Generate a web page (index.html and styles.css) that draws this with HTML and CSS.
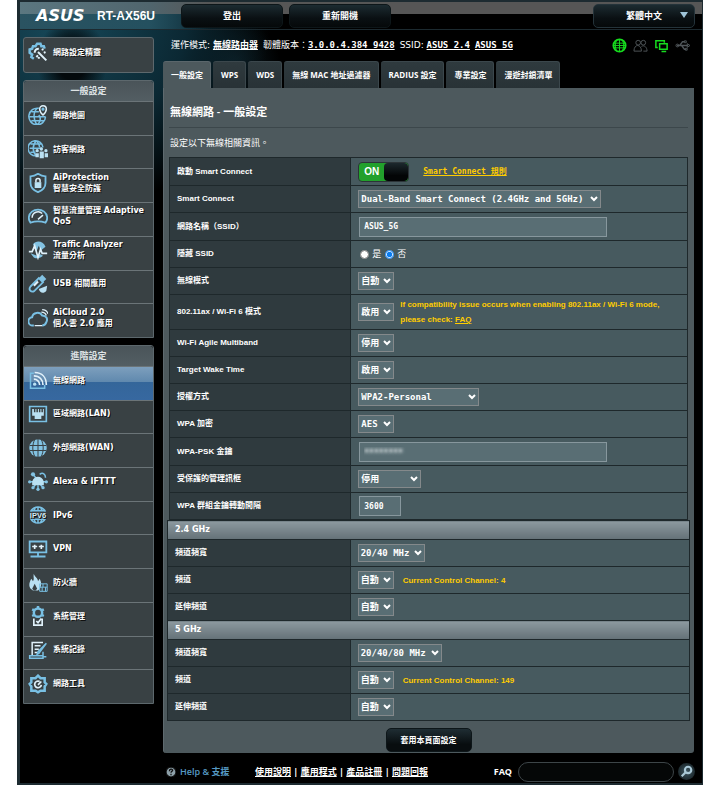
FILE: index.html
```html
<!DOCTYPE html>
<html lang="zh-TW">
<head>
<meta charset="utf-8">
<title>RT-AX56U - 無線網路</title>
<link rel="stylesheet" href="styles.css">
</head>
<body>
<div class="shell">
  <header class="top">
    <span class="logo">ASUS</span>
    <span class="model">RT-AX56U</span>
    <button class="top-btn logout" type="button">登出</button>
    <button class="top-btn" type="button">重新開機</button>
    <button class="top-btn lang" type="button"><span>繁體中文</span><svg class="tri" viewBox="0 0 8 6"><path d="M0 0h8L4 6z"/></svg></button>
  </header>

  <div class="body">
    <nav class="side">
      <a class="item wizard" href="#">
        <svg class="ico" viewBox="0 0 24 24"><path d="M7 20l-3-2 1-3-3-2V9l3-1 1-3 3 0 2-3h4l1 3 3 0 1 3" stroke-width="3"/><path class="white" d="M12 12l10 10M8 13c0-3 2-5 5-5M10 18l2-2M17 10l1-2M19 13l2-1M13 20l0-2" stroke-width="2.4"/></svg>
        <span>網路設定精靈</span></a>

      <section class="panel general">
        <h2>一般設定</h2>
        <a class="item" href="#"><svg class="ico" viewBox="0 0 24 24"><path d="M13 4A10 10 0 1 0 21 14M2 14h19M4 8h9M4 19h16M11 4c-5 5-5 14 0 20M13 12c3 4 2 8-2 12"/><path d="M18 1a4 4 0 0 1 4 4c0 3-4 7-4 7s-4-4-4-7a4 4 0 0 1 4-4z" class="white"/><circle cx="18" cy="5" r="1"/></svg><span>網路地圖</span></a>
        <a class="item" href="#"><svg class="ico" viewBox="0 0 24 24"><path d="M18 10A9 9 0 1 0 10 20M2 11h15M3 6h14M3 16h6M10 2c-5 5-5 13 0 18M10 2c3 3 4 5 4 8"/><g class="solid"><circle cx="11" cy="14" r="2"/><circle cx="16" cy="12" r="2"/><circle cx="21.500" cy="14" r="2"/><path d="M9 22v-5h4v5zM14 23v-8h5v8zM20 22v-5h4v5z"/></g></svg><span>訪客網路</span></a>
        <a class="item" href="#"><svg class="ico" viewBox="0 0 24 24"><path d="M12 1c3 2 6 3 9 3v8c0 5-4 9-9 11-5-2-9-6-9-11V4c3 0 6-1 9-3z" stroke-width="2.2"/><path class="solid" d="M8 11h8v7H8z"/><path class="white" d="M9.500 11V9a2.500 2.500 0 0 1 5 0v2"/></svg><span>AiProtection<br>智慧安全防護</span></a>
        <a class="item" href="#"><svg class="ico" viewBox="0 0 24 24"><path d="M3 20a11 10 0 1 1 18 0c-6-2-12-2-18 0z" stroke-width="2.2"/><path d="M5 14a7 7 0 0 1 12-5M12 16l6-5" class="white"/></svg><span>智慧流量管理 Adaptive QoS</span></a>
        <a class="item" href="#"><svg class="ico" viewBox="0 0 24 24"><path class="pale" d="M6 5c4-5 12-4 15 3l-6 5-2-6-3 7zM3 16l4 5c4 2 8 1 11-2l-3-2-4 2z"/><path class="white" d="M1 14h4l3-7 4 14 3-10 2 5h6" stroke-width="2"/></svg><span>Traffic Analyzer<br>流量分析</span></a>
        <a class="item" href="#"><svg class="ico" viewBox="0 0 24 24"><path d="M3 15L13 5l5 5L8 20c-4 3-8-1-5-5z" stroke-width="2.2"/><path class="pale" d="M13 5l4-4 5 5-4 4z"/><path d="M7 14l5-5" class="white" stroke-width="2.5"/><path class="solid" d="M13 18l10-4-1 6c-3 4-8 3-9-2z"/></svg><span>USB 相關應用</span></a>
        <a class="item" href="#"><svg class="ico" viewBox="0 0 24 24"><path d="M7 21H6a5 5 0 0 1-1-10c1-6 9-7 12-2 5 0 7 4 5 8-1 3-3 4-5 4" stroke-width="2.400"/><path class="white" d="M8 21h9M16 5c3 0 5 1 6 4M17 2c4 0 6 2 7 5" stroke-width="1.500"/></svg><span>AiCloud 2.0<br>個人雲 2.0 應用</span></a>
      </section>

      <section class="panel advanced">
        <h2>進階設定</h2>
        <a class="item active" href="#"><svg class="ico" viewBox="0 0 24 24"><path d="M7 4H3v18h17v-4" /><circle class="solid" cx="8" cy="17" r="2"/><path class="white" d="M7 11a7 7 0 0 1 7 7M7 7c7 0 11 5 11 11M8 3c9 0 14 6 14 15" stroke-width="2"/></svg><span>無線網路</span></a>
        <a class="item" href="#"><svg class="ico" viewBox="0 0 24 24"><path d="M2 3h20v18H2z" stroke-width="2"/><path class="solid" d="M5 6h14v8h-3v4H8v-4H5z"/><path class="dark" d="M8 6v4M11 6v4M14 6v4M17 6v4"/></svg><span>區域網路(LAN)</span></a>
        <a class="item" href="#"><svg class="ico" viewBox="0 0 24 24"><circle class="pale" cx="12" cy="12" r="10.500"/><path class="dark thin" d="M2 9h20M2 15h20M12 1v22M8 2c-3 6-3 14 0 20M16 2c3 6 3 14 0 20"/></svg><span>外部網路(WAN)</span></a>
        <a class="item" href="#"><svg class="ico" viewBox="0 0 24 24"><path d="M6 4l4 5M2 13h20M6 20l4-5M12 22v-5M18 20l-4-5M14 4c4-3 7 0 7 4"/><path class="solid" d="M5 17v-4c2-8 12-8 14 0v4z"/><g class="pale"><circle cx="2" cy="13" r="2"/><circle cx="6" cy="4" r="2.500"/><circle cx="22" cy="13" r="2"/><circle cx="6" cy="20" r="2"/><circle cx="12" cy="22" r="2"/><circle cx="18" cy="20" r="2"/></g></svg><span>Alexa &amp; IFTTT</span></a>
        <a class="item" href="#"><svg class="ico" viewBox="0 0 24 24"><path d="M3 8a10 10 0 0 1 18 0M3 16a10 10 0 0 0 18 0M3 7h18M3 17h18M12 2v5M12 17v5M9 3L7 7M15 3l2 4M7 17l2 4M17 17l-2 4"/><text x="12" y="15" text-anchor="middle">IPV6</text></svg><span>IPv6</span></a>
        <a class="item" href="#"><svg class="ico" viewBox="0 0 24 24"><path d="M2 3h20v13H2zM12 16v5M3 21h18" stroke-width="2.2"/><path class="white" d="M5 9h6M13 9h6M8 7v5M16 7v5" stroke-width="2"/></svg><span>VPN</span></a>
        <a class="item" href="#"><svg class="ico" viewBox="0 0 24 24"><path class="solid" d="M7 1c1 4 5 5 5 9l2-3c3 5 2 12-2 14H6c-6-3-5-9-2-14l2 3c2-3 0-5 1-9z"/><path class="hole" d="M8 13l3 6-2 2H7l-2-2z"/><path d="M14 13h9v9h-9zM14 17h9M18 13v4M17 17v5M21 17v5" stroke-width="1.200"/></svg><span>防火牆</span></a>
        <a class="item" href="#"><svg class="ico" viewBox="0 0 24 24"><circle cx="12" cy="8" r="5" stroke-width="3"/><path d="M12 0v3M5 4l2 1M17 11l2 1M5 12l2-1M17 5l2-1" stroke-width="3"/><path class="white" d="M7 15v8h10v-8M10 18l2 2 4-5" stroke-width="2"/></svg><span>系統管理</span></a>
        <a class="item" href="#"><svg class="ico" viewBox="0 0 24 24"><path class="white" d="M18 3H5v16M8 7h7M8 11h5M8 15h3"/><path d="M22 4l-9 12-2 1 1-3zM2 19h16v3H2zM18 14v6h4"/></svg><span>系統記錄</span></a>
        <a class="item" href="#"><svg class="ico" viewBox="0 0 24 24"><path d="M12 2l3 3h5l0 5 2 2-2 3v5h-5l-3 2-3-2H4v-5l-2-3 2-2V5h5z" stroke-width="3"/><path class="white" d="M14 9a4 4 0 1 0 2 4M12 13l4-4" stroke-width="2"/></svg><span>網路工具</span></a>
      </section>
    </nav>

    <main class="main">
      <div class="info">
        <span>運作模式: <a href="#">無線路由器</a></span>
        <span>韌體版本：<a class="mono" href="#">3.0.0.4.384_9428</a></span>
        <span>SSID: <a class="mono" href="#">ASUS_2.4</a></span>
        <a class="mono" href="#">ASUS_5G</a>
        <span class="status">
          <svg viewBox="0 0 16 16" class="on"><circle cx="8" cy="8" r="6.500" stroke-width="2"/><path d="M2 5.500h12M2 10.500h12M8 1v14M5 2c-2 4-2 8 0 12M11 2c2 4 2 8 0 12M1 8h14"/></svg>
          <svg viewBox="0 0 16 16"><circle cx="5.500" cy="5" r="2.500"/><circle cx="11" cy="5" r="2.500"/><path d="M1 14c0-4 2-6 4-6s4 2 4 6zM9 9c3-2 6 1 6 5h-4"/></svg>
          <svg viewBox="0 0 16 16" class="on"><path d="M4 10H2V3h9v2M6 6h8v6H6zM8 14.500h5" stroke-width="1.600"/></svg>
          <svg viewBox="0 0 16 16"><path d="M2 8h12M5 8l3-4h2M7 8l3 4h2" stroke-width="1.400"/><circle cx="2.500" cy="8" r="1.500"/><path d="M13 6l3 2-3 2zM10 3h2v2h-2zM11 11h2v2h-2z"/></svg>
        </span>
      </div>

      <nav class="tabs">
        <a class="current" href="#">一般設定</a><a href="#">WPS</a><a href="#">WDS</a><a href="#">無線 MAC 地址過濾器</a><a href="#">RADIUS 設定</a><a href="#">專業設定</a><a href="#">漫遊封鎖清單</a>
      </nav>

      <form class="content">
        <h1>無線網路 - 一般設定</h1>
        <p class="desc">設定以下無線相關資訊。</p>

        <table class="grid main-grid">
          <colgroup><col class="name-col"><col></colgroup>
          <tr class="tall"><th scope="row">啟動 Smart Connect</th><td><div class="line"><button class="switch" type="button" role="switch" aria-checked="true"><span class="switch-on">ON</span><span class="knob"></span></button><a class="rule" href="#">Smart Connect 規則</a></div></td></tr>
          <tr><th scope="row"><label for="sc">Smart Connect</label></th><td><span class="sel w-sc"><select id="sc"><option>Dual-Band Smart Connect (2.4GHz and 5GHz)</option></select><svg viewBox="0 0 8 6"><path d="M1 1l3 3 3-3"/></svg></span></td></tr>
          <tr class="tall"><th scope="row"><label for="ssid">網路名稱（SSID）</label></th><td><input class="txt" id="ssid" type="text" value="ASUS_5G"></td></tr>
          <tr><th scope="row">隱藏 SSID</th><td><div class="radios"><label><input type="radio" name="hide">是</label><label><input type="radio" name="hide" checked>否</label></div></td></tr>
          <tr><th scope="row"><label for="mode">無線模式</label></th><td><span class="sel w-2"><select id="mode"><option>自動</option></select><svg viewBox="0 0 8 6"><path d="M1 1l3 3 3-3"/></svg></span></td></tr>
          <tr class="double"><th scope="row"><label for="ax">802.11ax / Wi-Fi 6 模式</label></th><td><div class="line"><span class="sel w-2"><select id="ax"><option>啟用</option></select><svg viewBox="0 0 8 6"><path d="M1 1l3 3 3-3"/></svg></span><span class="note">If compatibility issue occurs when enabling 802.11ax / Wi-Fi 6 mode,<br>please check: <a href="#">FAQ</a></span></div></td></tr>
          <tr><th scope="row"><label for="agile">Wi-Fi Agile Multiband</label></th><td><span class="sel w-2"><select id="agile"><option>停用</option></select><svg viewBox="0 0 8 6"><path d="M1 1l3 3 3-3"/></svg></span></td></tr>
          <tr><th scope="row"><label for="twt">Target Wake Time</label></th><td><span class="sel w-2"><select id="twt"><option>啟用</option></select><svg viewBox="0 0 8 6"><path d="M1 1l3 3 3-3"/></svg></span></td></tr>
          <tr><th scope="row"><label for="auth">授權方式</label></th><td><span class="sel w-auth"><select id="auth"><option>WPA2-Personal</option></select><svg viewBox="0 0 8 6"><path d="M1 1l3 3 3-3"/></svg></span></td></tr>
          <tr><th scope="row"><label for="enc">WPA 加密</label></th><td><span class="sel w-2"><select id="enc"><option>AES</option></select><svg viewBox="0 0 8 6"><path d="M1 1l3 3 3-3"/></svg></span></td></tr>
          <tr class="tall"><th scope="row"><label for="psk">WPA-PSK 金鑰</label></th><td><input class="txt masked" id="psk" type="password" value="00000000"></td></tr>
          <tr><th scope="row"><label for="pmf">受保護的管理訊框</label></th><td><span class="sel w-pmf"><select id="pmf"><option>停用</option></select><svg viewBox="0 0 8 6"><path d="M1 1l3 3 3-3"/></svg></span></td></tr>
          <tr><th scope="row"><label for="rekey">WPA 群組金鑰轉動間隔</label></th><td><input class="txt short" id="rekey" type="text" value="3600"></td></tr>
        </table>

        <table class="grid band">
          <colgroup><col class="name-col"><col></colgroup>
          <tr><th class="band-head" colspan="2">2.4 GHz</th></tr>
          <tr><th scope="row"><label for="bw2">頻道頻寬</label></th><td><span class="sel w-bw2"><select id="bw2"><option>20/40 MHz</option></select><svg viewBox="0 0 8 6"><path d="M1 1l3 3 3-3"/></svg></span></td></tr>
          <tr><th scope="row"><label for="ch2">頻道</label></th><td><div class="line"><span class="sel w-2"><select id="ch2"><option>自動</option></select><svg viewBox="0 0 8 6"><path d="M1 1l3 3 3-3"/></svg></span><span class="note wide">Current Control Channel: 4</span></div></td></tr>
          <tr><th scope="row"><label for="ex2">延伸頻道</label></th><td><span class="sel w-2"><select id="ex2"><option>自動</option></select><svg viewBox="0 0 8 6"><path d="M1 1l3 3 3-3"/></svg></span></td></tr>
          <tr><th class="band-head" colspan="2">5 GHz</th></tr>
          <tr><th scope="row"><label for="bw5">頻道頻寬</label></th><td><span class="sel w-bw5"><select id="bw5"><option>20/40/80 MHz</option></select><svg viewBox="0 0 8 6"><path d="M1 1l3 3 3-3"/></svg></span></td></tr>
          <tr><th scope="row"><label for="ch5">頻道</label></th><td><div class="line"><span class="sel w-2"><select id="ch5"><option>自動</option></select><svg viewBox="0 0 8 6"><path d="M1 1l3 3 3-3"/></svg></span><span class="note wide">Current Control Channel: 149</span></div></td></tr>
          <tr><th scope="row"><label for="ex5">延伸頻道</label></th><td><span class="sel w-2"><select id="ex5"><option>自動</option></select><svg viewBox="0 0 8 6"><path d="M1 1l3 3 3-3"/></svg></span></td></tr>
        </table>

        <button class="apply" type="button">套用本頁面設定</button>
      </form>
    </main>
  </div>

  <footer class="foot">
    <span class="help"><svg viewBox="0 0 12 12"><circle cx="6" cy="6" r="6"/><path d="M4 5c0-3 4-3 4-1 0 1-2 1-2 3M6 8v2"/></svg>Help &amp; 支援</span>
    <span class="links"><a href="#">使用說明</a> | <a href="#">應用程式</a> | <a href="#">產品註冊</a> | <a href="#">問題回報</a></span>
    <label class="faq" for="faq">FAQ</label>
    <input class="faq-input" id="faq" type="text">
    <button class="search" type="button" aria-label="搜尋"><svg viewBox="0 0 16 16"><circle cx="9.500" cy="6.500" r="3"/><path d="M7 9l-3.500 3.500"/></svg></button>
  </footer>
</div>
</body>
</html>
```
FILE: styles.css
```css
* { box-sizing: border-box; }

body {
  margin: 0;
  padding: 0 17px;
  background: #fff;
  color: #fff;
  font: 9px/12px "Open Sans", "Noto Sans CJK TC", sans-serif;
}

a { color: inherit; }
button, input, select { margin: 0; font: inherit; color: inherit; }

.shell {
  border: solid #1d2b31;
  border-width: 2px 1px 2px 3px;
  background:
    radial-gradient(ellipse 35px 45px at 52px 60px, #03090c 40%, transparent),
    radial-gradient(ellipse 210px 190px at 40px 20px, #17495a, #0b2833 60%, transparent),
    radial-gradient(ellipse 45px 40px at 215px 60px, #0b1a20, transparent),
    #000;
}

/* Top bar */
.top {
  display: flex;
  align-items: center;
  height: 28px;
  padding: 0 7px 0 16px;
  border-bottom: 1px solid #1c2a30;
  background:
    linear-gradient(90deg, #5b7780, #50656d 130px, #565656 190px) top / 100% 12px no-repeat,
    linear-gradient(90deg, #2a5361, #24505f 130px, transparent 190px) bottom / 100% 16px no-repeat;
}
.logo { width: 49px; font: italic bold 16px/20px "DejaVu Sans", sans-serif; }
.model { flex: none; width: 84px; margin-left: 12px; font: bold 12px/20px "Liberation Sans", sans-serif; }
.top-btn {
  position: relative;
  width: 102px;
  height: 24px;
  margin-right: 6px;
  padding: 0;
  border: 1px solid #0d1619;
  border-radius: 5px;
  background: linear-gradient(#1c2b31, #0a1013 60%, #05090a);
  font-weight: bold;
}
.top-btn.lang { margin: 0 0 0 auto; border-color: #24333a; }
.tri { position: absolute; right: 6px; top: 7px; width: 8px; height: 6px; fill: #9fc4d8; }

/* Columns */
.body { display: flex; padding: 7px 8px 0 3px; }

.side {
  display: flex;
  flex: none;
  flex-direction: column;
  gap: 7px;
  width: 131px;
  margin-right: 9px;
  padding-bottom: 49px;
  font: bold 8px/11px "DejaVu Sans", "Noto Sans CJK TC", sans-serif;
}
.panel { display: flex; flex-direction: column; border: 1px solid #5d686d; border-radius: 3px 3px 0 0; }
.general { flex: 7 0 auto; }
.advanced { flex: 10 0 auto; }
.panel h2 {
  margin: 0;
  padding: 4px 0;
  border-radius: 3px 3px 0 0;
  background: linear-gradient(#4a5459, #535e63);
  color: #dfe3e5;
  font: 600 9px/12px "Open Sans", "Noto Sans CJK TC", sans-serif;
  text-align: center;
}
.item {
  display: flex;
  flex: 1 0 33px;
  align-items: center;
  gap: 5px;
  padding: 0 2px 6px 4px;
  border-top: 1px solid #6b7478;
  background: #394144;
  text-decoration: none;
  text-shadow: 1px 1px 0 #111;
}
.item.wizard { flex: none; height: 36px; border: 1px solid #5d686d; border-radius: 3px; }
.item.active { background: linear-gradient(#7d9fbd, #6089ae 45%, #34669a 46%, #3768a0); }
.ico { flex: none; width: 20px; height: 20px; fill: none; stroke: #79c0e4; stroke-width: 1.8; }
.ico .white { stroke: #e0f1fa; }
.ico .dark { stroke: #394144; }
.ico .thin { stroke-width: 1.2; }
.ico .solid { fill: #b9e0f2; stroke: none; }
.ico .pale { fill: #82c2e2; stroke: none; }
.ico .hole { fill: #394144; stroke: none; }
.ico text { fill: #d5edf8; stroke: none; font: bold 9px "Liberation Sans", sans-serif; }

.main { flex: 1; min-width: 0; }

.info {
  display: flex;
  align-items: center;
  gap: 5px;
  height: 16px;
  padding: 0 4px 0 8px;
  font-family: "DejaVu Sans", "Noto Sans CJK TC", sans-serif;
  white-space: nowrap;
}
.info a { font-weight: bold; }
.info .mono { font-family: "DejaVu Sans Mono", monospace; }
.status { display: flex; gap: 6px; margin-left: auto; }
.status svg { width: 15px; height: 15px; fill: none; stroke: #50565a; }
.status .on { stroke: #16dc1e; }

.tabs { display: flex; gap: 2px; margin-top: 8px; }
.tabs a {
  padding: 7px 7px 7px 8px;
  border: 1px solid #3b474c;
  border-width: 1px 1px 0 0;
  border-radius: 3px 3px 0 0;
  background: linear-gradient(#2f3a3e, #283236);
  font: bold 8px/12px "Open Sans", "Noto Sans CJK TC", sans-serif;
  text-decoration: none;
  white-space: nowrap;
}
.tabs .current { border-color: #5a666b; background: #4d595d; }

.content {
  padding: 15px 4px 1px 3px;
  border-left: 1px solid #5e6a6f;
  border-radius: 0 0 3px 3px;
  background: #4d595d;
}
h1 {
  margin: 0 2px;
  padding: 0 0 6px 1px;
  border-bottom: 1px solid #3c474b;
  font: 600 11px/18px "Open Sans", "Noto Sans CJK TC", sans-serif;
}
.desc { margin: 9px 3px 8px; }

/* Settings tables */
.grid { border-collapse: collapse; table-layout: fixed; font: bold 8px/12px "Liberation Sans", "Noto Sans CJK TC", sans-serif; }
.main-grid { width: calc(100% - 4px); margin: 0 2px; }
.band { width: 100%; }
.name-col { width: 35%; }
.grid th, .grid td { height: 27px; padding: 0 7px; border: 1px solid #1e282b; text-align: left; }
.grid th { background: #2f3a3e; }
.grid td { background: #475a5f; }
.grid .tall th, .grid .tall td { height: 28px; }
.grid .double th, .grid .double td { height: 35px; }
.grid .band-head {
  height: 19px;
  background: linear-gradient(#8c999f, #647177);
  font: bold 8px/12px "DejaVu Sans", sans-serif;
}
.line { display: flex; align-items: center; gap: 6px; }
.note { color: #fc0; line-height: 15px; }
.note.wide { padding-left: 3px; }

.sel { position: relative; display: block; flex: none; height: 18px; }
.sel select {
  display: block;
  width: 100%;
  height: 18px;
  padding: 0 2px;
  appearance: none;
  border: 1px solid #84898b;
  border-radius: 0;
  background: #596e74;
  font: bold 9px/14px "DejaVu Sans Mono", "Noto Sans CJK TC", monospace;
}
.sel svg { position: absolute; right: 3px; top: 6px; width: 8px; height: 6px; fill: none; stroke: #fff; stroke-width: 2; pointer-events: none; }
.w-sc { width: 243px; }
.w-2 { width: 36px; }
.w-auth { width: 121px; }
.w-pmf { width: 63px; }
.w-bw2 { width: 67px; }
.w-bw5 { width: 84px; }

.txt {
  display: block;
  width: 248px;
  height: 20px;
  margin-left: 1px;
  padding: 0 4px;
  border: 1px solid #87979d;
  border-radius: 0;
  background: #596e74;
  font: bold 8px/14px "DejaVu Sans Mono", monospace;
}
.short { width: 42px; }
.masked { color: transparent; text-shadow: 0 0 3px #c9d2d5, 0 0 4px #c9d2d5; }

.radios { display: flex; gap: 4px; padding-left: 2px; font-size: 9px; font-weight: normal; }
.radios label { display: flex; align-items: center; gap: 3px; }
.radios input { width: 9px; height: 9px; accent-color: #0a7cf0; }

.switch { display: flex; width: 51px; height: 20px; padding: 0; border: 1px solid #2c3438; border-radius: 4px; background: #22a02c; overflow: hidden; }
.switch-on { flex: 1; font: bold 10px/18px "Liberation Sans", sans-serif; }
.knob { width: 24px; height: 18px; border-radius: 4px; background: linear-gradient(#1c282d, #030506 70%); }
.rule { margin-left: 8px; color: #fc0; font: bold 8px/12px "DejaVu Sans Mono", "Noto Sans CJK TC", monospace; }

.apply {
  display: block;
  height: 24px;
  margin: 7px auto 0;
  padding: 0 14px;
  border: 1px solid #0d1619;
  border-radius: 5px;
  background: linear-gradient(#1f2d33, #080d0f 70%);
  font: bold 8px/12px "Open Sans", "Noto Sans CJK TC", sans-serif;
}

/* Footer */
.foot { display: flex; align-items: center; height: 30px; padding: 7px 7px 0 146px; white-space: nowrap; }
.help { display: flex; align-items: center; gap: 4px; width: 89px; color: #569ac4; font-size: 9px; font-weight: 600; }
.help svg { width: 10px; height: 10px; fill: #8da0a9; stroke: #111; stroke-width: 1.5; }
.links, .faq { font-weight: bold; }
.faq { margin-left: auto; }
.faq-input { width: 156px; height: 20px; margin: 0 4px 0 6px; padding: 0 8px; border: 1px solid #3d4548; border-radius: 10px; background: #050707; }
.search { width: 17px; height: 17px; padding: 0; border: 0; border-radius: 50%; background: radial-gradient(#3d5661, #101719); }
.search svg { display: block; width: 17px; height: 17px; fill: none; stroke: #a9c8d6; stroke-width: 2; }
```
